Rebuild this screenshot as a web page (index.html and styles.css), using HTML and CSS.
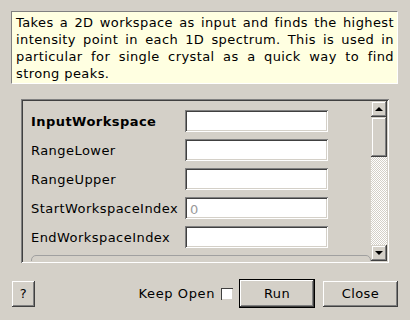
FILE: index.html
```html
<!DOCTYPE html>
<html lang="en">
  <head>
    <meta charset="UTF-8" />
    <title>FindPeaks dialog</title>
    <link rel="stylesheet" href="styles.css">
  </head>
  <body>
    <div class="desc">
      <div class="line">Takes a 2D workspace as input and finds the highest</div>
      <div class="line">intensity point in each 1D spectrum. This is used in</div>
      <div class="line">particular for single crystal as a quick way to find</div>
      <div class="line last">strong peaks.</div>
    </div>
    <div class="frame">
      <div class="props">
        <div class="row">
          <label class="bold">InputWorkspace</label>
          <input type="text" class="field" />
        </div>
        <div class="row">
          <label>RangeLower</label>
          <input type="text" class="field" />
        </div>
        <div class="row">
          <label>RangeUpper</label>
          <input type="text" class="field" />
        </div>
        <div class="row">
          <label>StartWorkspaceIndex</label>
          <input type="text" class="field" placeholder="0" />
        </div>
        <div class="row">
          <label>EndWorkspaceIndex</label>
          <input type="text" class="field" />
        </div>
        <div class="group"></div>
      </div>
      <div class="vscroll">
        <div class="sbtn"><span class="arrow up"></span></div>
        <div class="thumb"></div>
        <div class="trough"></div>
        <div class="sbtn"><span class="arrow down"></span></div>
      </div>
    </div>
    <div class="footer">
      <button class="btn help">?</button>
      <div class="spacer"></div>
      <label class="keep">Keep Open <span class="check"></span></label>
      <button class="btn run">Run</button>
      <button class="btn close">Close</button>
    </div>
  </body>
</html>
```

FILE: styles.css
```css
body {
  margin: 0;
  background: #d4d0c8;
  font-family: "DejaVu Sans", sans-serif;
  font-size: 13px;
  color: #000;
}
.desc {
  margin: 11px 12px 0 11px;
  height: 73px;
  box-sizing: border-box;
  padding: 2px 3px 2px 4px;
  background: #ffffe1;
  border: 1px solid;
  border-color: #808080 #ffffff #ffffff #808080;
  line-height: 17px;
  letter-spacing: 0.4px;
}
.line {
  white-space: nowrap;
  text-align: justify;
  text-align-last: justify;
}
.line.last {
  text-align-last: left;
}
.frame {
  display: flex;
  margin: 15px 0 0 21px;
  width: 368px;
  height: 164px;
  box-sizing: border-box;
  padding: 2px;
  box-shadow: inset 1px 1px #808080, inset -1px -1px #ffffff, inset 2px 2px #404040, inset -2px -2px #d4d0c8;
  overflow: hidden;
}
.props {
  flex: 1;
  padding: 9px 0 0 8px;
  overflow: hidden;
}
.row {
  display: flex;
  align-items: center;
  height: 22px;
  margin-bottom: 7px;
}
.row label {
  width: 154px;
  letter-spacing: 0.45px;
}
.bold {
  font-weight: bold;
}
.field {
  width: 143px;
  height: 22px;
  box-sizing: border-box;
  border: none;
  outline: none;
  background: #fff;
  padding: 2px 4px 0 5px;
  font: inherit;
  box-shadow: inset 1px 1px #808080, inset -1px -1px #ffffff, inset 2px 2px #404040, inset -2px -2px #d4d0c8;
}
.field::placeholder {
  color: #9a9a9a;
}
.group {
  margin-top: 7px;
  height: 30px;
  border: 1px solid #a0a0a0;
  border-radius: 5px;
}
.vscroll {
  width: 16px;
  display: flex;
  flex-direction: column;
}
.sbtn,
.thumb {
  background: #d4d0c8;
  box-shadow: inset -1px -1px #404040, inset 1px 1px #d4d0c8, inset -2px -2px #808080, inset 2px 2px #ffffff;
}
.sbtn {
  height: 16px;
  display: flex;
  align-items: center;
  justify-content: center;
}
.thumb {
  height: 40px;
}
.trough {
  flex: 1;
  background: repeating-conic-gradient(#ffffff 0 25%, #d4d0c8 0 50%) 0 0 / 2px 2px;
}
.arrow {
  width: 0;
  height: 0;
  border-left: 4px solid transparent;
  border-right: 4px solid transparent;
}
.arrow.up {
  border-bottom: 4px solid #000;
}
.arrow.down {
  border-top: 4px solid #000;
}
.footer {
  display: flex;
  align-items: center;
  margin-top: 16px;
  padding: 0 12px;
}
.spacer {
  flex: 1;
}
.btn {
  height: 26px;
  border: none;
  background: #d4d0c8;
  font: inherit;
  color: #000;
  padding: 0;
  letter-spacing: 0.4px;
  box-shadow: inset -1px -1px #404040, inset 1px 1px #ffffff, inset -2px -2px #808080, inset 2px 2px #d4d0c8;
}
.help {
  width: 23px;
}
.keep {
  display: flex;
  align-items: center;
  gap: 6px;
  margin-right: 6px;
  letter-spacing: 0.6px;
}
.check {
  width: 12px;
  height: 12px;
  box-sizing: border-box;
  background: #fff;
  box-shadow: inset 1px 1px #404040, inset -1px -1px #d4d0c8;
}
.run {
  width: 76px;
  height: 29px;
  border: 1px solid #000;
  margin-right: 8px;
}
.close {
  width: 75px;
}
```
